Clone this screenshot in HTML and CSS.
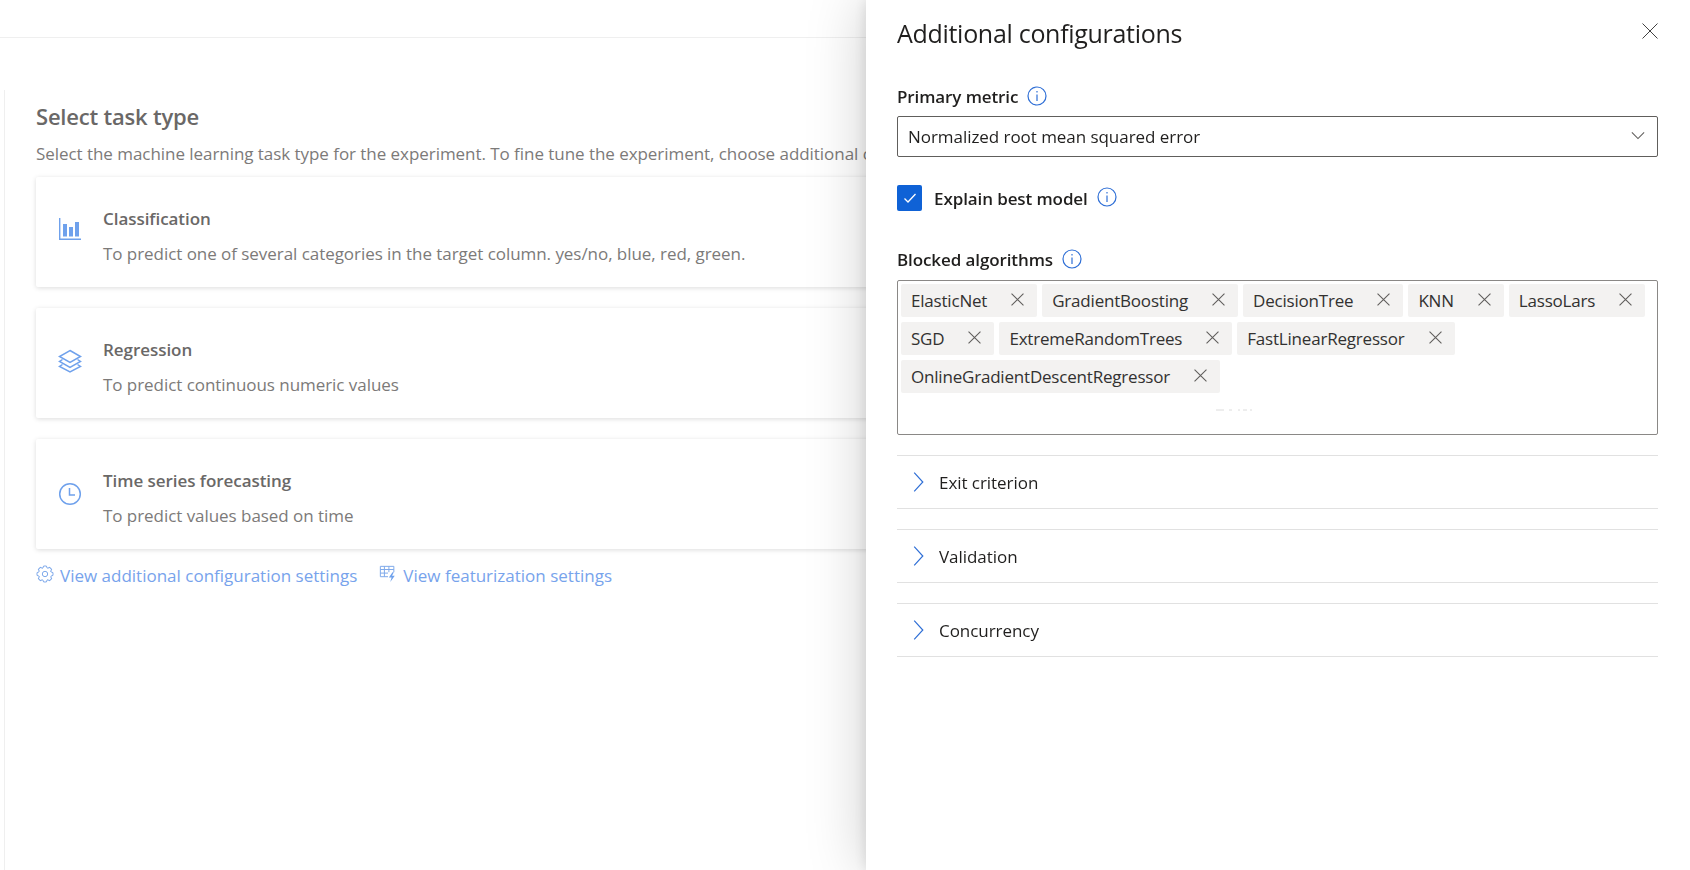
FILE: index.html
```html
<!DOCTYPE html>
<html lang="en">
<head>
<meta charset="utf-8">
<title>Additional configurations</title>
<link rel="stylesheet" href="styles.css">
</head>
<body>
<div class="page">
  <div class="topbar"></div>
  <main class="content">
    <h1 class="task-heading">Select task type</h1>
    <p class="task-desc">Select the machine learning task type for the experiment. To fine tune the experiment, choose additional c</p>
    <div class="cards">
      <section class="card">
        <svg class="card-icon icon-bars" viewBox="0 0 24 24"><path class="fill" d="M1 1h1.400v20.600H23V23H1z"/><rect class="fill" x="5" y="7" width="4" height="12.500"/><rect class="fill" x="11" y="10" width="4" height="9.500"/><rect class="fill" x="17" y="5" width="4" height="14.500"/></svg>
        <div><h2 class="card-title">Classification</h2><p class="card-desc">To predict one of several categories in the target column. yes/no, blue, red, green.</p></div>
      </section>
      <section class="card">
        <svg class="card-icon icon-layers" viewBox="0 0 24 24"><g class="line"><path d="M12 1.500 22.500 7.500 12 13.500 1.500 7.500z"/><path d="M4.500 10.500 1.500 12.500 12 18.500 22.500 12.500 19.500 10.500"/><path d="M4.500 15.500 1.500 17.500 12 23 22.500 17.500 19.500 15.500"/></g></svg>
        <div><h2 class="card-title">Regression</h2><p class="card-desc">To predict continuous numeric values</p></div>
      </section>
      <section class="card">
        <svg class="card-icon icon-clock" viewBox="0 0 24 24"><g class="line"><circle cx="12" cy="12" r="10.300"/><path d="M11.500 6v7H17"/></g></svg>
        <div><h2 class="card-title">Time series forecasting</h2><p class="card-desc">To predict values based on time</p></div>
      </section>
    </div>
    <nav class="links">
      <a class="link">
        <svg class="link-icon" viewBox="0 0 20 20"><defs><path id="tooth" d="M7.610 3.420 8.440 1.140H11.560L12.390 3.420 12.960 3.660"/></defs><g class="line thin"><circle cx="10" cy="10" r="3"/><use href="#tooth"/><use href="#tooth" transform="rotate(45 10 10)"/><use href="#tooth" transform="rotate(90 10 10)"/><use href="#tooth" transform="rotate(135 10 10)"/><use href="#tooth" transform="rotate(180 10 10)"/><use href="#tooth" transform="rotate(225 10 10)"/><use href="#tooth" transform="rotate(270 10 10)"/><use href="#tooth" transform="rotate(315 10 10)"/></g></svg>
        <span>View additional configuration settings</span>
      </a>
      <a class="link">
        <svg class="link-icon" viewBox="0 0 20 20"><g class="line thin"><path d="M10 13H1.500V1.500h15V8"/><path d="M1.500 5h15M1.500 9H10M6 1.500V13M11 1.500V8"/></g><path class="fill" d="M15 8l-4 6h3l-1.500 5 5-7H14.500l2-4z"/></svg>
        <span>View featurization settings</span>
      </a>
    </nav>
  </main>
</div>

<aside class="panel">
  <header class="panel-head">
    <h2 class="panel-title">Additional configurations</h2>
    <svg class="close" viewBox="0 0 16 16"><path d="M.5.500l15 15M15.500.500l-15 15"/></svg>
  </header>

  <div class="label-row metric-label">
    <span class="label">Primary metric</span>
    <svg class="info" viewBox="0 0 20 20"><circle cx="10" cy="10" r="9"/><path d="M10 8.500V15M10 5v1.500"/></svg>
  </div>
  <div class="dropdown">
    <span>Normalized root mean squared error</span>
    <svg class="chev-down" viewBox="0 0 16 10"><path d="M1 1.500l7 7 7-7"/></svg>
  </div>

  <div class="label-row explain">
    <span class="checkbox"><svg viewBox="0 0 16 16"><path d="M2.500 8.500l3.500 3.500 7.500-8"/></svg></span>
    <span class="label">Explain best model</span>
    <svg class="info" viewBox="0 0 20 20"><circle cx="10" cy="10" r="9"/><path d="M10 8.500V15M10 5v1.500"/></svg>
  </div>

  <div class="label-row blocked-label">
    <span class="label">Blocked algorithms</span>
    <svg class="info" viewBox="0 0 20 20"><circle cx="10" cy="10" r="9"/><path d="M10 8.500V15M10 5v1.500"/></svg>
  </div>
  <div class="tagbox">
    <span class="chip">ElasticNet<svg viewBox="0 0 12 12"><path d="M.5.500l11 11M11.500.500l-11 11"/></svg></span>
    <span class="chip">GradientBoosting<svg viewBox="0 0 12 12"><path d="M.5.500l11 11M11.500.500l-11 11"/></svg></span>
    <span class="chip">DecisionTree<svg viewBox="0 0 12 12"><path d="M.5.500l11 11M11.500.500l-11 11"/></svg></span>
    <span class="chip">KNN<svg viewBox="0 0 12 12"><path d="M.5.500l11 11M11.500.500l-11 11"/></svg></span>
    <span class="chip">LassoLars<svg viewBox="0 0 12 12"><path d="M.5.500l11 11M11.500.500l-11 11"/></svg></span>
    <span class="chip">SGD<svg viewBox="0 0 12 12"><path d="M.5.500l11 11M11.500.500l-11 11"/></svg></span>
    <span class="chip">ExtremeRandomTrees<svg viewBox="0 0 12 12"><path d="M.5.500l11 11M11.500.500l-11 11"/></svg></span>
    <span class="chip">FastLinearRegressor<svg viewBox="0 0 12 12"><path d="M.5.500l11 11M11.500.500l-11 11"/></svg></span>
    <span class="chip">OnlineGradientDescentRegressor<svg viewBox="0 0 12 12"><path d="M.5.500l11 11M11.500.500l-11 11"/></svg></span>
    <svg class="clip-mark" viewBox="0 0 36 2"><path d="M0 1h8M13 1h3M22 1h2M27 1h4M34 1h2"/></svg>
  </div>

  <div class="accordion">
    <div class="acc-row"><svg viewBox="0 0 10 20"><path d="M.7.700 9.300 10 .7 19.300"/></svg><span>Exit criterion</span></div>
    <div class="acc-row"><svg viewBox="0 0 10 20"><path d="M.7.700 9.300 10 .7 19.300"/></svg><span>Validation</span></div>
    <div class="acc-row"><svg viewBox="0 0 10 20"><path d="M.7.700 9.300 10 .7 19.300"/></svg><span>Concurrency</span></div>
  </div>
</aside>
</body>
</html>
```
FILE: styles.css
```css
* { box-sizing: border-box; }
html, body { margin: 0; height: 100%; overflow: hidden; }
body {
  background: #fff;
  font-family: "Open Sans", "Noto Sans", sans-serif;
  font-size: 17px;
  letter-spacing: -0.05px;
  color: #201f1e;
}
h1, h2, p { margin: 0; }

.page { width: 1690px; height: 870px; overflow: hidden; }
.topbar { height: 38px; border-bottom: 1px solid #efefef; }
.content {
  margin: 52px 0 0 4px;
  padding-left: 31px;
  width: 1650px;
  height: 780px;
  border-left: 1px solid #efefef;
}
.task-heading { font-size: 22px; font-weight: 600; line-height: 27px; padding-top: 13px; color: #6a6867; letter-spacing: -0.2px; }
.task-desc { margin-top: 12px; line-height: 24px; color: #7c7a79; white-space: nowrap; }
.cards { display: flex; flex-direction: column; gap: 21px; margin-top: 11px; }
.card {
  height: 110px;
  background: #fff;
  border-radius: 2px;
  box-shadow: 0 1px 5px rgba(0,0,0,.14);
  display: flex;
  align-items: center;
  gap: 21px;
  padding: 5px 0 0 22px;
}
.card-icon { width: 24px; height: 24px; flex: none; margin-top: -1px; }
.icon-bars { margin-bottom: 10px; }
.icon-layers { margin-bottom: 8px; }
.icon-clock { margin-bottom: 4px; }
.card > div { padding-top: 4px; }
.fill { fill: #6fa1ec; }
.line { fill: none; stroke: #6fa1ec; stroke-width: 1.5; }
.line.thin { stroke-width: 1.100; stroke: #7ea9ea; }
.card-title { font-size: 17px; font-weight: 600; line-height: 24px; color: #6a6867; }
.card-desc { margin-top: 11px; line-height: 24px; color: #7c7a79; }
.links { display: flex; gap: 22px; margin-top: 15px; }
.link { display: flex; align-items: center; gap: 6px; color: #77a3ec; line-height: 24px; letter-spacing: 0; }
.link-icon { width: 18px; height: 18px; margin-top: -4px; flex: none; }

.panel {
  position: fixed;
  top: 0;
  right: 0;
  bottom: 0;
  width: 824px;
  background: #fff;
  padding: 0 32px 0 31px;
  box-shadow: 0 0 57px rgba(0,0,0,.2), 0 0 14px rgba(0,0,0,.12);
}
.panel-head { display: flex; justify-content: space-between; align-items: flex-start; height: 86px; padding-top: 17px; }
.panel-title { font-size: 25px; font-weight: 400; line-height: 34px; color: #201f1e; letter-spacing: -0.3px; margin-top: -1px; }
.close { width: 16px; height: 16px; margin: 6px 0 0 0; fill: none; stroke: #424242; stroke-width: 1; }
.label-row { display: flex; align-items: center; }
.label { font-weight: 600; color: #201f1e; line-height: 22px; letter-spacing: -0.1px; }
.info { width: 20px; height: 20px; margin-left: 9px; margin-top: -3px; fill: none; stroke: #2f6fd6; stroke-width: 1.200; }
.metric-label { height: 22px; }
.dropdown {
  margin-top: 8px;
  height: 41px;
  border: 1px solid #605e5c;
  border-radius: 2px;
  display: flex;
  align-items: center;
  justify-content: space-between;
  padding: 0 12px 0 10px;
  color: #201f1e;
}
.chev-down { width: 14px; height: 9px; margin-top: -2px; fill: none; stroke: #605e5c; stroke-width: 1.200; }
.explain { margin-top: 28px; height: 26px; }
.explain .label { padding-top: 1px; }
.checkbox {
  width: 25px;
  height: 26px;
  background: #0f62d6;
  border-radius: 2px;
  margin-right: 12px;
  display: flex;
  align-items: center;
  justify-content: center;
}
.checkbox svg { width: 16px; height: 16px; fill: none; stroke: #fff; stroke-width: 1.300; }
.blocked-label { margin-top: 38px; height: 22px; }
.tagbox {
  position: relative;
  margin-top: 9px;
  height: 155px;
  border: 1px solid #8a8886;
  border-radius: 2px;
  padding: 3px;
  display: flex;
  flex-wrap: wrap;
  align-content: flex-start;
  gap: 5px 5px;
}
.chip {
  height: 33px;
  background: #f3f2f1;
  border-radius: 2px;
  display: inline-flex;
  align-items: center;
  padding: 0 13px 0 10px;
  color: #323130;
  letter-spacing: -0.2px;
}
.chip svg { width: 13px; height: 13px; margin: -2px 0 0 24px; fill: none; stroke: #605e5c; stroke-width: 1; }
.clip-mark { position: absolute; left: 318px; top: 128px; width: 36px; height: 2px; fill: none; stroke: #dcdcdc; stroke-width: 1; }
.accordion { margin-top: 20px; display: flex; flex-direction: column; gap: 20px; }
.acc-row {
  height: 54px;
  border-top: 1px solid #e1e1e1;
  border-bottom: 1px solid #e1e1e1;
  display: flex;
  align-items: center;
  gap: 15px;
  padding-left: 16px;
  color: #201f1e;
}
.acc-row svg { width: 11px; height: 20px; flex: none; fill: none; stroke: #2f6fd6; stroke-width: 1.200; }
```
